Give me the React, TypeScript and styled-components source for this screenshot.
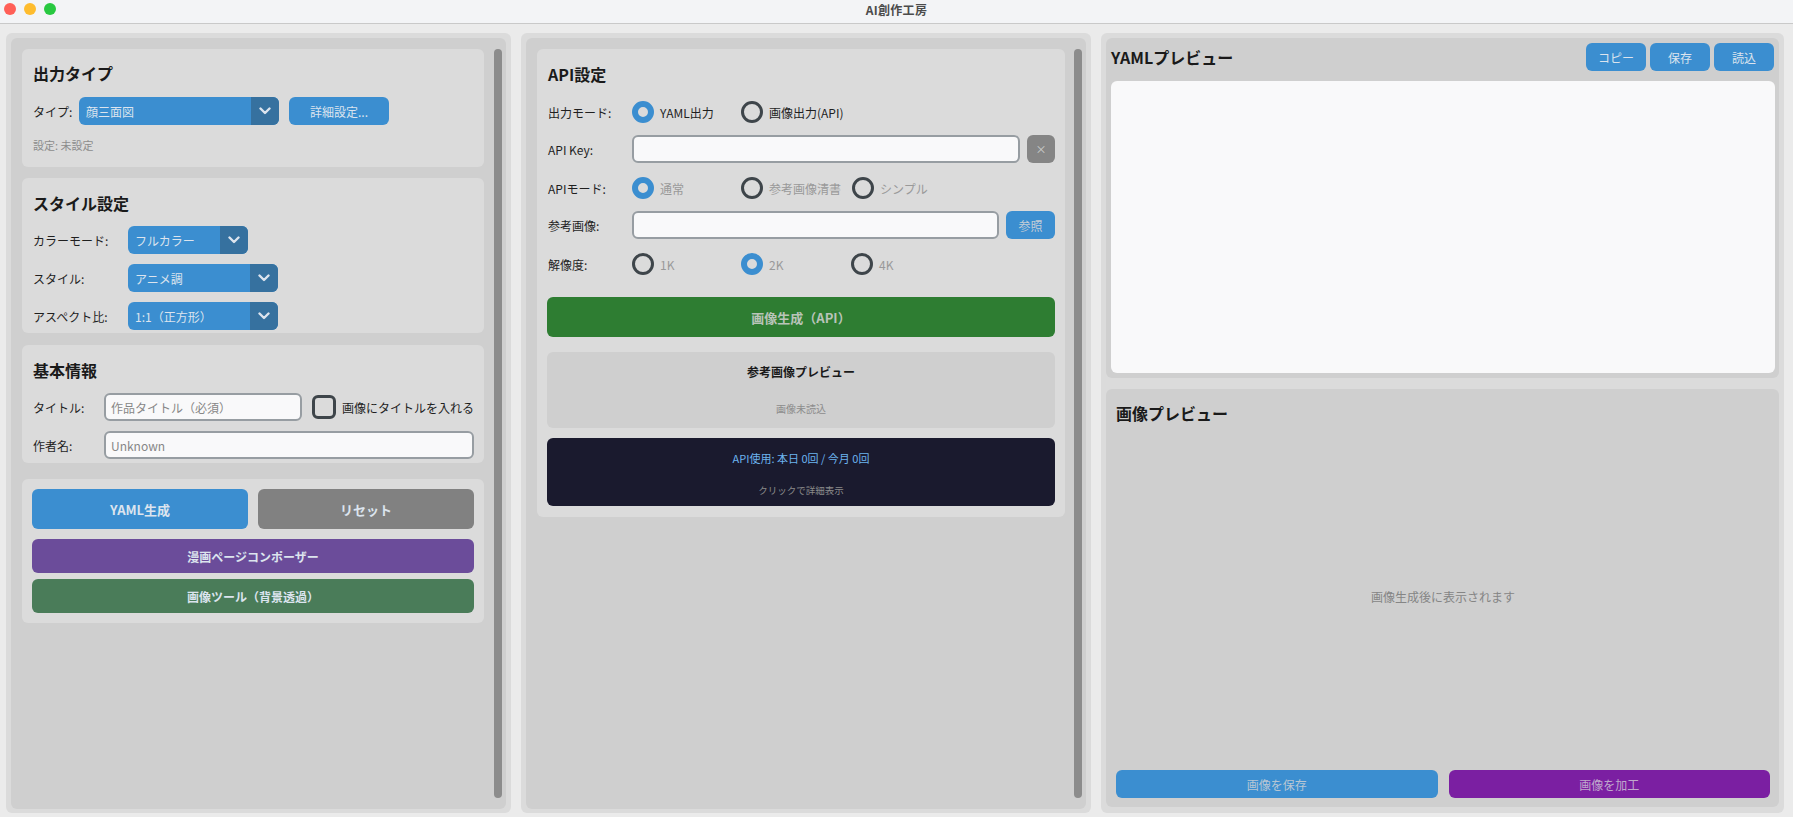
import React from "react";
import styled, { createGlobalStyle } from "styled-components";

const C = {
  blue: "#3B8ED0",
  blueDark: "#36719F",
  btnText: "#DCE4EE",
  disabledText: "#BDBDBD",
  text: "#1a1a1a",
  frame: "#dbdbdb",
  frameTop: "#cfcfcf",
  page: "#ebebeb",
  scroll: "#8c8c8c",
  entryBg: "#F9F9FA",
  entryBorder: "#979DA2",
  ring: "#3E454A",
  gray60: "#999999",
};

const GlobalStyle = createGlobalStyle`
  html, body { margin: 0; padding: 0; }
  body {
    background: ${C.page};
    font-family: "Noto Sans CJK JP", "Noto Sans", sans-serif;
    color: ${C.text};
  }
  input, button, textarea { font-family: inherit; }
  * { box-sizing: border-box; }
`;

const Window = styled.div`
  width: 1793px;
  height: 817px;
  display: flex;
  flex-direction: column;
  background: ${C.page};
  overflow: hidden;
`;

const TitleBar = styled.div`
  height: 24px;
  flex-shrink: 0;
  display: grid;
  grid-template-columns: 1fr auto 1fr;
  align-items: center;
  background: #f3f4f6;
  border-bottom: 1px solid #c9c9c9;
  padding-bottom: 5px;
`;

const Lights = styled.div`
  display: flex;
  gap: 8px;
  padding-left: 4px;
`;

const Light = styled.span<{ $color: string }>`
  width: 12px;
  height: 12px;
  border-radius: 50%;
  background: ${(p) => p.$color};
`;

const TitleText = styled.div`
  font-size: 12px;
  font-weight: 700;
  color: #4b4b4b;
  letter-spacing: 0.3px;
`;

const Main = styled.div`
  flex: 1;
  display: flex;
  gap: 10px;
  padding: 9px 9px 4px 6px;
  min-height: 0;
`;

const Panel = styled.div<{ $width?: number }>`
  ${(p) => (p.$width ? `width: ${p.$width}px; flex-shrink: 0;` : "flex: 1; min-width: 0;")}
  background: ${C.frame};
  border-radius: 6px;
  padding: 5px 5px 4px 5px;
  display: flex;
  flex-direction: column;
`;

const ScrollFrame = styled.div`
  flex: 1;
  background: ${C.frameTop};
  border-radius: 6px;
  display: flex;
  padding: 11px 4px 11px 11px;
  min-height: 0;
`;

const ScrollContent = styled.div`
  flex: 1;
  min-width: 0;
  display: flex;
  flex-direction: column;
`;

const ScrollThumb = styled.div<{ $gap: number }>`
  width: 8px;
  margin-left: ${(p) => p.$gap}px;
  background: ${C.scroll};
  border-radius: 4px;
  flex-shrink: 0;
`;

const Card = styled.div<{ $mt?: number; $pt?: number; $pb?: number }>`
  background: ${C.frame};
  border-radius: 6px;
  margin-top: ${(p) => p.$mt ?? 0}px;
  padding: ${(p) => p.$pt ?? 14}px 10px ${(p) => p.$pb ?? 10}px 10px;
  display: flex;
  flex-direction: column;
`;

const CardTitle = styled.div`
  font-size: 16px;
  font-weight: 700;
  line-height: 20px;
  color: ${C.text};
  padding-left: 1px;
`;

const Row = styled.div<{ $mt?: number }>`
  display: flex;
  align-items: center;
  height: 28px;
  margin-top: ${(p) => p.$mt ?? 0}px;
`;

const Label = styled.div<{ $width: number }>`
  width: ${(p) => p.$width}px;
  flex-shrink: 0;
  font-size: 12px;
  color: #1f1f1f;
  padding-left: 1px;
  white-space: nowrap;
`;

const Select = styled.div<{ $width: number }>`
  width: ${(p) => p.$width}px;
  height: 28px;
  flex-shrink: 0;
  display: flex;
  border-radius: 6px;
  overflow: hidden;
  background: ${C.blue};
  color: ${C.btnText};
  font-size: 12px;
`;

const SelectText = styled.div`
  flex: 1;
  display: flex;
  align-items: center;
  padding-left: 7px;
  white-space: nowrap;
`;

const SelectArrow = styled.div`
  width: 28px;
  background: ${C.blueDark};
  display: flex;
  align-items: center;
  justify-content: center;
`;

const Button = styled.button<{
  $bg: string;
  $color?: string;
  $h?: number;
  $w?: number;
  $size?: number;
  $bold?: boolean;
  $flex?: boolean;
}>`
  height: ${(p) => p.$h ?? 28}px;
  ${(p) => (p.$w ? `width: ${p.$w}px; flex-shrink: 0;` : "")}
  ${(p) => (p.$flex ? "flex: 1;" : "")}
  border: none;
  border-radius: 6px;
  background: ${(p) => p.$bg};
  color: ${(p) => p.$color ?? C.btnText};
  font-size: ${(p) => p.$size ?? 12}px;
  font-weight: ${(p) => (p.$bold ? 700 : 400)};
  display: flex;
  align-items: center;
  justify-content: center;
  padding: 0;
  white-space: nowrap;
`;

const Note = styled.div`
  font-size: 11px;
  line-height: 14px;
  color: #8c8c8c;
  margin-top: 13px;
  padding-left: 1px;
`;

const TextInput = styled.input<{ $width?: number }>`
  ${(p) => (p.$width ? `width: ${p.$width}px; flex-shrink: 0;` : "flex: 1; min-width: 0;")}
  height: 28px;
  border: 2px solid ${C.entryBorder};
  border-radius: 6px;
  background: ${C.entryBg};
  padding: 0 5px;
  font-size: 12px;
  color: #242424;
  outline: none;
  &::placeholder {
    color: #878787;
  }
`;

const CheckBox = styled.span`
  width: 24px;
  height: 24px;
  flex-shrink: 0;
  border: 3px solid ${C.ring};
  border-radius: 6px;
  margin-left: 10px;
`;

const CheckLabel = styled.span`
  font-size: 12px;
  color: #1f1f1f;
  margin-left: 6px;
  white-space: nowrap;
`;

const RadioItem = styled.div<{ $width?: number }>`
  display: flex;
  align-items: center;
  width: ${(p) => (p.$width ? `${p.$width}px` : "auto")};
  flex-shrink: 0;
`;

const RadioCircle = styled.span<{ $checked?: boolean }>`
  width: 22px;
  height: 22px;
  border-radius: 50%;
  flex-shrink: 0;
  border: ${(p) => (p.$checked ? `6px solid ${C.blue}` : `3px solid ${C.ring}`)};
`;

const RadioText = styled.span<{ $disabled?: boolean }>`
  margin-left: 6px;
  font-size: 12px;
  color: ${(p) => (p.$disabled ? C.gray60 : "#1f1f1f")};
  white-space: nowrap;
`;

const ButtonRow = styled.div<{ $gap: number; $mt?: number }>`
  display: flex;
  gap: ${(p) => p.$gap}px;
  margin-top: ${(p) => p.$mt ?? 0}px;
`;

const Gap = styled.div<{ $w: number }>`
  width: ${(p) => p.$w}px;
  flex-shrink: 0;
`;

const PreviewBox = styled.div`
  margin-top: 15px;
  height: 76px;
  background: ${C.frameTop};
  border-radius: 6px;
  display: flex;
  flex-direction: column;
  align-items: center;
`;

const PreviewTitle = styled.div`
  font-size: 12px;
  font-weight: 700;
  line-height: 16px;
  margin-top: 12px;
  color: ${C.text};
`;

const PreviewSub = styled.div`
  font-size: 10px;
  line-height: 14px;
  margin-top: 22px;
  color: #8c8c8c;
`;

const UsageBox = styled.div`
  margin-top: 10px;
  height: 68px;
  background: #1a1a2e;
  border-radius: 6px;
  display: flex;
  flex-direction: column;
  align-items: center;
`;

const UsageMain = styled.div`
  font-size: 11px;
  line-height: 14px;
  margin-top: 13px;
  color: #6cb4ef;
`;

const UsageSub = styled.div`
  font-size: 9.5px;
  line-height: 12px;
  margin-top: 19px;
  color: #8a8a8a;
`;

const RightPanel = styled(Panel)`
  padding: 5px 5px 6px 5px;
  gap: 11px;
`;

const Section = styled.div<{ $height?: number }>`
  ${(p) => (p.$height ? `height: ${p.$height}px; flex-shrink: 0;` : "flex: 1; min-height: 0;")}
  background: ${C.frameTop};
  border-radius: 6px;
  display: flex;
  flex-direction: column;
`;

const YamlHeader = styled.div`
  display: flex;
  align-items: center;
  justify-content: space-between;
  height: 28px;
  margin: 5px 5px 0 5px;
`;

const SectionTitle = styled.div`
  font-size: 16px;
  font-weight: 700;
  line-height: 20px;
  color: ${C.text};
`;

const HeaderButtons = styled.div`
  display: flex;
  gap: 4px;
`;

const TextBox = styled.div`
  flex: 1;
  margin: 10px 4px 5px 5px;
  background: ${C.entryBg};
  border-radius: 6px;
`;

const ImageSectionInner = styled.div`
  flex: 1;
  display: flex;
  flex-direction: column;
  padding: 14px 9px 9px 10px;
`;

const Placeholder = styled.div`
  flex: 1;
  display: flex;
  align-items: center;
  justify-content: center;
  font-size: 12px;
  color: #858585;
`;

const Chevron = () => (
  <svg width="12" height="8" viewBox="0 0 12 8">
    <polyline
      points="1.5,1.5 6,6 10.5,1.5"
      fill="none"
      stroke={C.btnText}
      strokeWidth="2.4"
      strokeLinecap="round"
      strokeLinejoin="round"
    />
  </svg>
);

const Dropdown = ({ width, value }: { width: number; value: string }) => (
  <Select $width={width}>
    <SelectText>{value}</SelectText>
    <SelectArrow>
      <Chevron />
    </SelectArrow>
  </Select>
);

const Radio = ({
  label,
  checked,
  disabled,
  width,
}: {
  label: string;
  checked?: boolean;
  disabled?: boolean;
  width?: number;
}) => (
  <RadioItem $width={width}>
    <RadioCircle $checked={checked} />
    <RadioText $disabled={disabled}>{label}</RadioText>
  </RadioItem>
);

const LeftColumn = () => (
  <Panel $width={505}>
    <ScrollFrame>
      <ScrollContent>
        <Card $pt={14} $pb={15}>
          <CardTitle>出力タイプ</CardTitle>
          <Row $mt={14}>
            <Label $width={47}>タイプ:</Label>
            <Dropdown width={200} value="顔三面図" />
            <Gap $w={10} />
            <Button $bg={C.blue} $w={100}>
              詳細設定...
            </Button>
          </Row>
          <Note>設定: 未設定</Note>
        </Card>

        <Card $mt={11} $pt={15} $pb={3}>
          <CardTitle>スタイル設定</CardTitle>
          <Row $mt={13}>
            <Label $width={96}>カラーモード:</Label>
            <Dropdown width={120} value="フルカラー" />
          </Row>
          <Row $mt={10}>
            <Label $width={96}>スタイル:</Label>
            <Dropdown width={150} value="アニメ調" />
          </Row>
          <Row $mt={10}>
            <Label $width={96}>アスペクト比:</Label>
            <Dropdown width={150} value="1:1（正方形）" />
          </Row>
        </Card>

        <Card $mt={12} $pt={15} $pb={4}>
          <CardTitle>基本情報</CardTitle>
          <Row $mt={13}>
            <Label $width={72}>タイトル:</Label>
            <TextInput $width={198} placeholder="作品タイトル（必須）" />
            <CheckBox />
            <CheckLabel>画像にタイトルを入れる</CheckLabel>
          </Row>
          <Row $mt={10}>
            <Label $width={72}>作者名:</Label>
            <TextInput placeholder="Unknown" />
          </Row>
        </Card>

        <Card $mt={16} $pt={10} $pb={10}>
          <ButtonRow $gap={10}>
            <Button $bg={C.blue} $h={40} $size={13} $bold $flex>
              YAML生成
            </Button>
            <Button $bg="#818181" $h={40} $size={13} $bold $flex $color="#DCE4EE">
              リセット
            </Button>
          </ButtonRow>
          <ButtonRow $gap={0} $mt={10}>
            <Button $bg="#6b4c9a" $h={34} $bold $flex>
              漫画ページコンポーザー
            </Button>
          </ButtonRow>
          <ButtonRow $gap={0} $mt={6}>
            <Button $bg="#4a7c59" $h={34} $bold $flex>
              画像ツール（背景透過）
            </Button>
          </ButtonRow>
        </Card>
      </ScrollContent>
      <ScrollThumb $gap={10} />
    </ScrollFrame>
  </Panel>
);

const MiddleColumn = () => (
  <Panel $width={570}>
    <ScrollFrame>
      <ScrollContent>
        <Card $pt={15} $pb={11}>
          <CardTitle>API設定</CardTitle>
          <Row $mt={14}>
            <Label $width={85}>出力モード:</Label>
            <Radio label="YAML出力" checked width={109} />
            <Radio label="画像出力(API)" />
          </Row>
          <Row $mt={9}>
            <Label $width={85}>API Key:</Label>
            <TextInput />
            <Gap $w={7} />
            <Button $bg="#858585" $w={28} $size={11} $color="#cfcfcf">
              ×
            </Button>
          </Row>
          <Row $mt={11}>
            <Label $width={85}>APIモード:</Label>
            <Radio label="通常" checked disabled width={109} />
            <Radio label="参考画像清書" disabled width={111} />
            <Radio label="シンプル" disabled />
          </Row>
          <Row $mt={9}>
            <Label $width={85}>参考画像:</Label>
            <TextInput />
            <Gap $w={7} />
            <Button $bg={C.blue} $w={49} $color="#c3ccd6">
              参照
            </Button>
          </Row>
          <Row $mt={11}>
            <Label $width={85}>解像度:</Label>
            <Radio label="1K" disabled width={109} />
            <Radio label="2K" checked disabled width={110} />
            <Radio label="4K" disabled />
          </Row>
          <ButtonRow $gap={0} $mt={19}>
            <Button $bg="#2e7d32" $h={40} $size={13} $bold $flex $color="#b9c4b9">
              画像生成（API）
            </Button>
          </ButtonRow>
          <PreviewBox>
            <PreviewTitle>参考画像プレビュー</PreviewTitle>
            <PreviewSub>画像未読込</PreviewSub>
          </PreviewBox>
          <UsageBox>
            <UsageMain>API使用: 本日 0回 / 今月 0回</UsageMain>
            <UsageSub>クリックで詳細表示</UsageSub>
          </UsageBox>
        </Card>
      </ScrollContent>
      <ScrollThumb $gap={9} />
    </ScrollFrame>
  </Panel>
);

const RightColumn = () => (
  <RightPanel>
    <Section $height={340}>
      <YamlHeader>
        <SectionTitle>YAMLプレビュー</SectionTitle>
        <HeaderButtons>
          <Button $bg={C.blue} $w={60}>
            コピー
          </Button>
          <Button $bg={C.blue} $w={60}>
            保存
          </Button>
          <Button $bg={C.blue} $w={60}>
            読込
          </Button>
        </HeaderButtons>
      </YamlHeader>
      <TextBox />
    </Section>
    <Section>
      <ImageSectionInner>
        <SectionTitle>画像プレビュー</SectionTitle>
        <Placeholder>画像生成後に表示されます</Placeholder>
        <ButtonRow $gap={11}>
          <Button $bg={C.blue} $flex $color="#b8c6d4">
            画像を保存
          </Button>
          <Button $bg="#7b1fa2" $flex $color="#c0a8cc">
            画像を加工
          </Button>
        </ButtonRow>
      </ImageSectionInner>
    </Section>
  </RightPanel>
);

export default function App() {
  return (
    <>
      <GlobalStyle />
      <Window>
        <TitleBar>
          <Lights>
            <Light $color="#ff5f57" />
            <Light $color="#febc2e" />
            <Light $color="#28c840" />
          </Lights>
          <TitleText>AI創作工房</TitleText>
          <div />
        </TitleBar>
        <Main>
          <LeftColumn />
          <MiddleColumn />
          <RightColumn />
        </Main>
      </Window>
    </>
  );
}
